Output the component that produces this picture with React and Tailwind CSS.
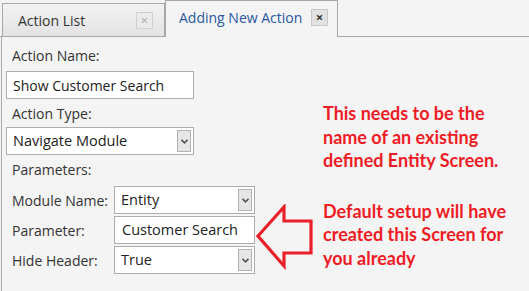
import React from 'react';

const font = { fontFamily: '"Open Sans", "Noto Sans", sans-serif' };

const Chevron = () => (
  <svg width="7" height="5" viewBox="0 0 7 5" className="block">
    <path d="M0.5 0.8 L3.5 3.8 L6.5 0.8" fill="none" stroke="#555" strokeWidth="1.6" />
  </svg>
);

const SelectBox = ({ value, className = '' }) => (
  <div className={`flex items-stretch h-[28px] border border-[#adadad] bg-white p-[2px] ${className}`}>
    <div className="flex-1 flex items-center pl-[4px] text-[14.5px] text-[#222] whitespace-nowrap">{value}</div>
    <div className="w-[14px] flex items-center justify-center border border-[#b2b2b2] bg-[#e6e6e6]">
      <Chevron />
    </div>
  </div>
);

const TextBox = ({ value, className = '', textClass = '' }) => (
  <div className={`flex items-center h-[28px] border border-[#adadad] bg-white ${className}`}>
    <span className={`text-[#222] whitespace-nowrap ${textClass}`}>{value}</span>
  </div>
);

const CloseBox = ({ active }) => (
  <div
    className={`w-[17px] h-[17px] flex items-center justify-center border text-[13px] leading-none ${
      active ? 'border-[#c8c8c8] bg-[#e2e2e2] text-[#333] font-bold' : 'border-[#d0d0d0] bg-[#ebebeb] text-[#a8a8a8]'
    }`}
  >
    ×
  </div>
);

const FieldRow = ({ label, children }) => (
  <div className="flex items-center">
    <div className="w-[112px] pl-[10px] text-[14px] text-[#333] whitespace-nowrap">{label}</div>
    {children}
  </div>
);

export default function App() {
  return (
    <div className="w-[529px] h-[291px] bg-[#f4f4f4] overflow-hidden" style={font}>
      {/* tab strip */}
      <div className="flex items-end h-[37px] border-b border-[#a8a8a8] pl-[2px]">
        <div className="w-[163px] h-[33px] flex items-center justify-between pl-[15px] pr-[11px] border border-b-0 border-[#a8a8a8] bg-gradient-to-b from-[#f2f2f2] to-[#e3e3e3]">
          <span className="text-[14px] text-[#333] whitespace-nowrap">Action List</span>
          <CloseBox />
        </div>
        <div className="w-[173px] h-[37px] -mb-px flex items-center justify-between pl-[13px] pr-[9px] pb-[3px] border border-b-0 border-[#a8a8a8] bg-[#f4f4f4]">
          <span className="text-[14px] text-[#2957a0] whitespace-nowrap">Adding New Action</span>
          <CloseBox active />
        </div>
      </div>

      {/* content */}
      <div className="ml-px h-full border-l border-[#a8a8a8] flex">
        <div className="w-[254px] pt-[9px] pl-[4px] flex flex-col">
          <div className="pl-[6px] text-[14px] leading-[20px] text-[#333]">Action Name:</div>
          <TextBox value="Show Customer Search" className="w-[188px] mt-[5px] pl-[6px]" textClass="text-[14px]" />
          <div className="pl-[6px] mt-[5px] text-[14px] leading-[20px] text-[#333]">Action Type:</div>
          <SelectBox value="Navigate Module" className="w-[188px] mt-[3px]" />
          <div className="pl-[6px] mt-[5px] text-[14px] leading-[20px] text-[#333]">Parameters:</div>
          <div className="flex flex-col gap-[2px] mt-[6px] -ml-[4px]">
            <FieldRow label="Module Name:">
              <SelectBox value="Entity" className="w-[141px]" />
            </FieldRow>
            <FieldRow label="Parameter:">
              <TextBox value="Customer Search" className="w-[141px] pl-[7px]" textClass="text-[14.5px]" />
            </FieldRow>
            <FieldRow label="Hide Header:">
              <SelectBox value="True" className="w-[141px]" />
            </FieldRow>
          </div>
        </div>

        <div className="flex-1 relative">
          <svg width="60" height="70" viewBox="0 0 60 70" className="absolute left-[0px] top-[167px]">
            <polygon
              points="2,32 28,3 28,17 55,17 55,49 28,49 28,62"
              fill="none"
              stroke="#e8202a"
              strokeWidth="3.2"
              strokeLinejoin="miter"
            />
          </svg>
          <div
            className="pl-[67px] pt-[65px] text-[18px] leading-[23.5px] font-bold text-[#ee1c25]"
            style={{ fontFamily: 'Lato, "Open Sans", sans-serif' }}
          >
            <p className="whitespace-nowrap">This needs to be the</p>
            <p className="whitespace-nowrap">name of an existing</p>
            <p className="whitespace-nowrap">defined Entity Screen.</p>
            <p className="whitespace-nowrap mt-[27px]">Default setup will have</p>
            <p className="whitespace-nowrap">created this Screen for</p>
            <p className="whitespace-nowrap">you already</p>
          </div>
        </div>
      </div>
    </div>
  );
}
